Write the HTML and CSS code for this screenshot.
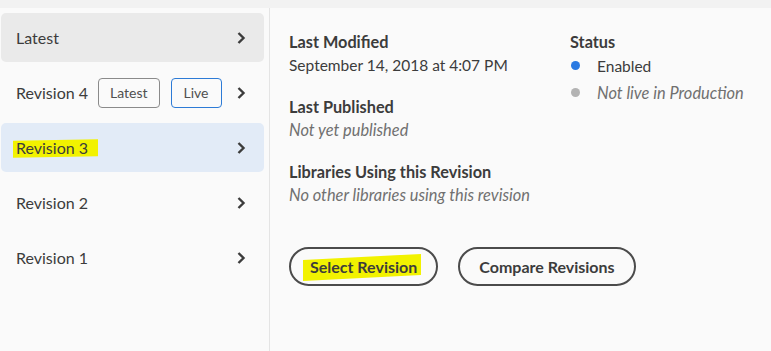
FILE: index.html
```html
<!DOCTYPE html>
<html lang="en">
<head>
  <meta charset="UTF-8">
  <title>Revisions</title>
  <link rel="stylesheet" href="styles.css">
</head>
<body>
  <div class="topbar"></div>
  <div class="layout">
    <ul class="revisions">
      <li class="rev rev-latest">
        <span class="rev-name">Latest</span>
        <svg class="chev" viewBox="0 0 10 14"><path d="M2.5 2 L7.5 7 L2.5 12" /></svg>
      </li>
      <li class="rev">
        <span class="rev-name">Revision 4</span>
        <span class="badge">Latest</span>
        <span class="badge badge-live">Live</span>
        <svg class="chev" viewBox="0 0 10 14"><path d="M2.5 2 L7.5 7 L2.5 12" /></svg>
      </li>
      <li class="rev rev-selected">
        <span class="rev-name"><span class="marker marker-rev">Revision 3</span></span>
        <svg class="chev" viewBox="0 0 10 14"><path d="M2.5 2 L7.5 7 L2.5 12" /></svg>
      </li>
      <li class="rev">
        <span class="rev-name">Revision 2</span>
        <svg class="chev" viewBox="0 0 10 14"><path d="M2.5 2 L7.5 7 L2.5 12" /></svg>
      </li>
      <li class="rev">
        <span class="rev-name">Revision 1</span>
        <svg class="chev" viewBox="0 0 10 14"><path d="M2.5 2 L7.5 7 L2.5 12" /></svg>
      </li>
    </ul>

    <div class="details">
      <div class="info">
        <div class="info-main">
          <div class="field">
            <div class="label">Last Modified</div>
            <div class="value">September 14, 2018 at 4:07 PM</div>
          </div>
          <div class="field">
            <div class="label">Last Published</div>
            <div class="value muted">Not yet published</div>
          </div>
          <div class="field">
            <div class="label">Libraries Using this Revision</div>
            <div class="value muted">No other libraries using this revision</div>
          </div>
        </div>
        <div class="info-status">
          <div class="label">Status</div>
          <div class="status-row"><span class="dot dot-blue"></span><span class="value">Enabled</span></div>
          <div class="status-row"><span class="dot dot-gray"></span><span class="value muted">Not live in Production</span></div>
        </div>
      </div>

      <div class="actions">
        <button class="btn"><span class="marker marker-btn">Select Revision</span></button>
        <button class="btn">Compare Revisions</button>
      </div>
    </div>
  </div>
</body>
</html>
```

FILE: styles.css
```css
body {
  margin: 0;
  background: #fafafa;
  font-family: 'Lato', 'Open Sans', sans-serif;
  color: #4b4b4b;
}

.topbar {
  height: 8px;
  background: #f2f2f2;
}

.layout {
  display: flex;
  height: 343px;
}

.revisions {
  list-style: none;
  margin: 0;
  padding: 5px 5px 0 1px;
  width: 263px;
  border-right: 1px solid #e4e4e4;
}

.rev {
  display: flex;
  align-items: center;
  height: 49px;
  margin-bottom: 6px;
  padding: 0 18px 0 15px;
  border-radius: 5px;
  font-size: 16px;
  color: #3c3c3c;
  white-space: nowrap;
}

.rev-latest {
  background: #eaeaea;
}

.rev-selected {
  background: #e2ebf7;
}

.rev-name {
  margin-right: 10px;
}

.chev {
  width: 10px;
  height: 14px;
  margin-left: auto;
  flex-shrink: 0;
  fill: none;
  stroke: #3c3c3c;
  stroke-width: 2.4;
}

.badge {
  display: inline-flex;
  align-items: center;
  justify-content: center;
  box-sizing: border-box;
  height: 30px;
  padding: 0 11px;
  margin-right: 11px;
  border: 1px solid #8a8a8a;
  border-radius: 4px;
  font-size: 14px;
  color: #505050;
}

.badge-live {
  border-color: #2d7bd6;
  padding: 0 12px;
}

.marker {
  position: relative;
  z-index: 0;
}

.marker::before {
  content: "";
  position: absolute;
  z-index: -1;
  background: #f2f200;
}

.marker-rev::before {
  left: -3px;
  right: -10px;
  top: 2px;
  bottom: 0;
  transform: skewY(-1deg);
}

.marker-btn::before {
  left: -7px;
  right: -4px;
  top: 0;
  bottom: -2px;
  transform: skewY(-3deg);
}

.details {
  flex: 1;
  padding: 24px 0 0 19px;
}

.info {
  display: flex;
}

.info-main {
  width: 281px;
}

.field {
  margin-bottom: 19px;
}

.label {
  font-size: 16.3px;
  font-weight: 700;
  color: #3c3c3c;
  line-height: 20px;
}

.value {
  font-size: 15.5px;
  line-height: 26px;
  color: #3c3c3c;
}

.muted {
  font-size: 16.4px;
  font-style: italic;
  color: #707070;
}

.status-row {
  display: flex;
  align-items: center;
  height: 27px;
}

.dot {
  width: 9px;
  height: 9px;
  border-radius: 50%;
  margin: 0 17px 0 1px;
}

.dot-blue {
  background: #2a7ae2;
}

.dot-gray {
  background: #b3b3b3;
}

.actions {
  display: flex;
  gap: 20px;
  margin-top: 20px;
}

.btn {
  height: 39px;
  padding: 0 19px;
  border: 2px solid #4b4b4b;
  border-radius: 20px;
  background: transparent;
  font-family: 'Lato', 'Open Sans', sans-serif;
  font-size: 16px;
  font-weight: 700;
  color: #3c3c3c;
}
```
